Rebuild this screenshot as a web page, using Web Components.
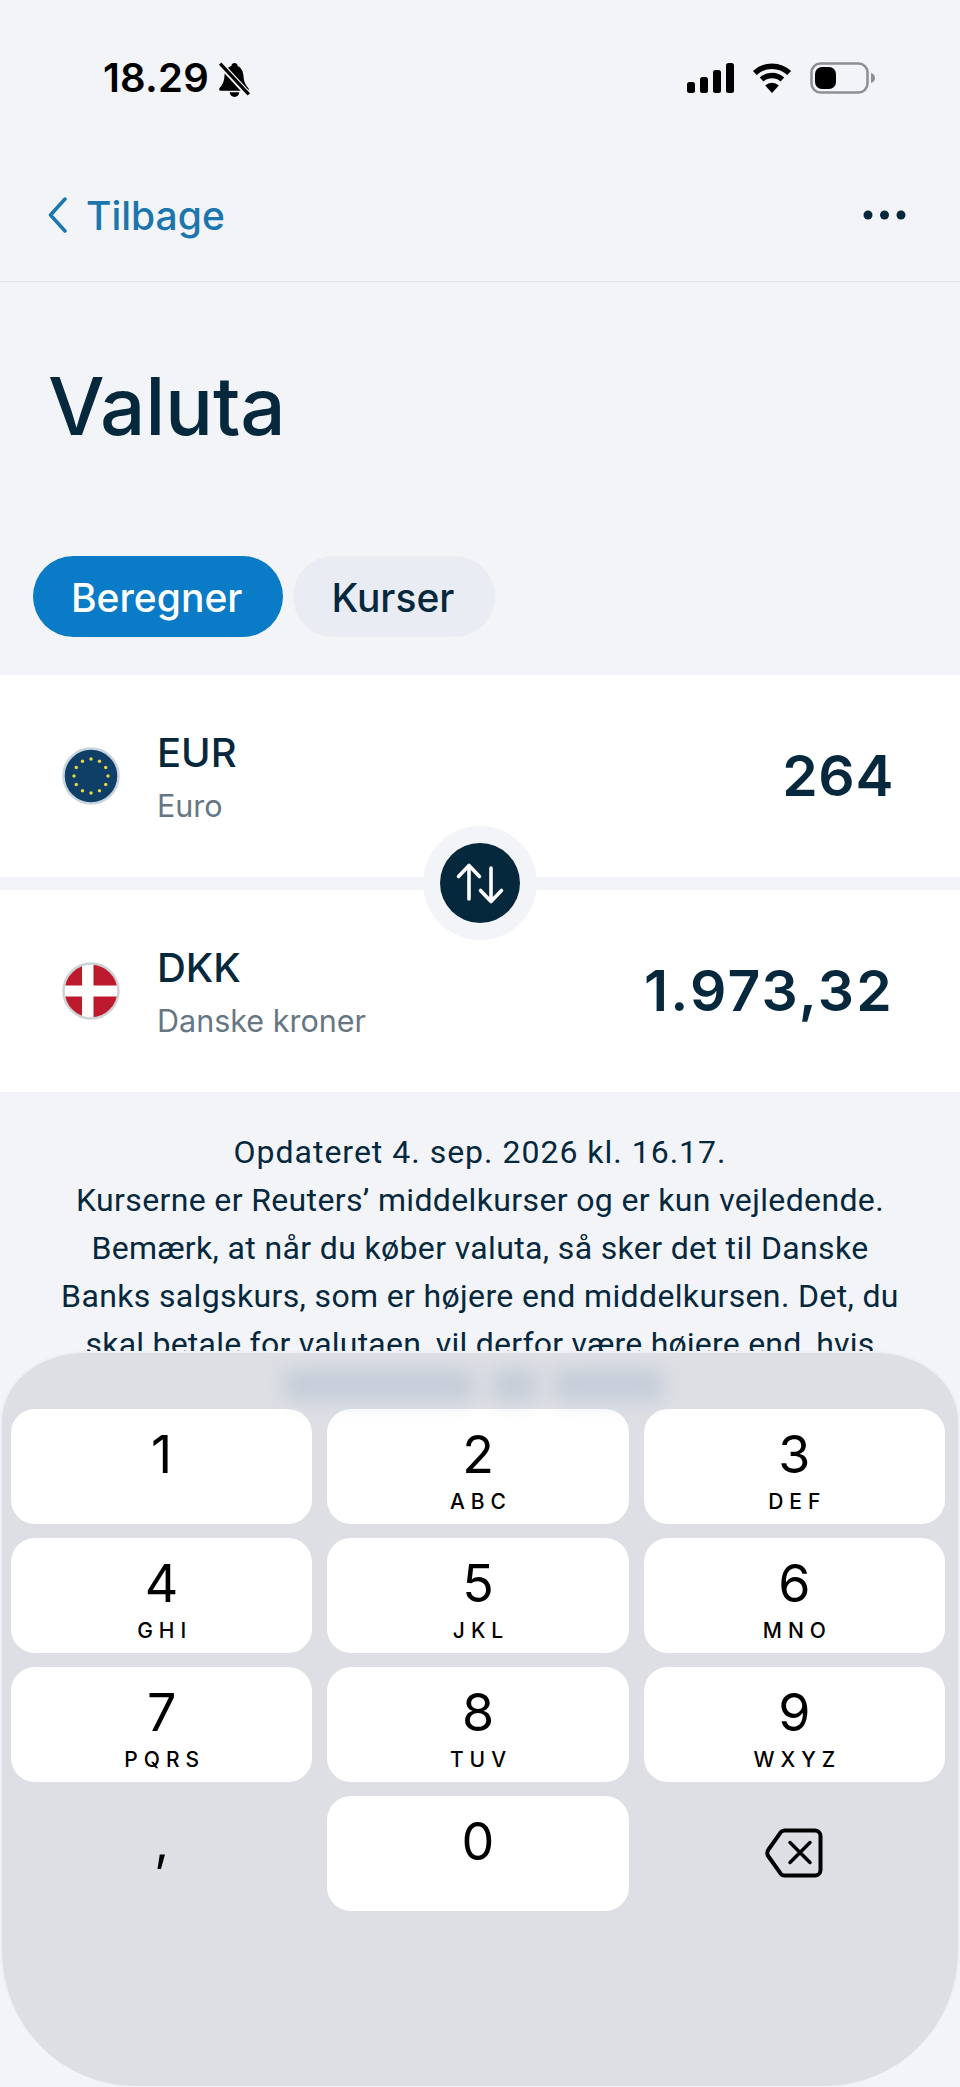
<!DOCTYPE html>
<html lang="da"><head><meta charset="utf-8"><title>Valuta</title>
<style>
html,body{margin:0;padding:0;background:#f2f4f8}
body{font-family:Inter,"Liberation Sans",sans-serif;color:#06283d}
</style></head><body>
<bank-app>
  <status-bar time="18.29"></status-bar>
  <nav-bar>Tilbage</nav-bar>
  <page-title>Valuta</page-title>
  <seg-tabs><seg-tab active>Beregner</seg-tab><seg-tab>Kurser</seg-tab></seg-tabs>
  <currency-panel>
    <currency-row code="EUR" name="Euro" amount="264" flag="eu" track=".6"></currency-row>
    <currency-row code="DKK" name="Danske kroner" amount="1.973,32" flag="dk" track="2.2"></currency-row>
    <swap-button></swap-button>
  </currency-panel>
  <info-text>
    <span style="letter-spacing:1px">Opdateret 4. sep. 2026 kl. 16.17.</span>
    <span>Kurserne er Reuters’ middelkurser og er kun vejledende.</span>
    <span>Bemærk, at når du køber valuta, så sker det til Danske</span>
    <span>Banks salgskurs, som er højere end middelkursen. Det, du</span>
    <span style="letter-spacing:.23px">skal betale for valutaen, vil derfor være højere end, hvis</span>
  </info-text>
  <num-keyboard>
    <key-cap>1</key-cap><key-cap letters="ABC">2</key-cap><key-cap letters="DEF">3</key-cap>
    <key-cap letters="GHI">4</key-cap><key-cap letters="JKL">5</key-cap><key-cap letters="MNO">6</key-cap>
    <key-cap letters="PQRS">7</key-cap><key-cap letters="TUV">8</key-cap><key-cap letters="WXYZ">9</key-cap>
    <key-cap plain>,</key-cap><key-cap>0</key-cap><key-cap plain icon></key-cap>
  </num-keyboard>
</bank-app>
<script>
function def(name, css, html, init){
  customElements.define(name, class extends HTMLElement{
    constructor(){super();const r=this.attachShadow({mode:'open'});
      r.innerHTML='<style>'+css+'</style>'+(typeof html==='function'?html(this):html);}
    connectedCallback(){ if(init) init(this); }
  });
}
def('bank-app',`:host{display:flex;flex-direction:column;position:relative;width:960px;height:2087px;overflow:hidden;background:#f2f4f8}`,`<slot></slot>`);

def('status-bar',`:host{display:flex;align-items:flex-start;height:150px;padding:62px 84px 0 103px;box-sizing:border-box}
 .t{font:600 40px/33px Inter,sans-serif;color:#000;letter-spacing:.2px;margin-top:-1px}
 .bell{margin-left:9px;display:block}
 .r{margin-left:auto;display:flex;align-items:flex-start;gap:18px}
 svg{display:block}`,
 `<span class="t"></span>
 <svg class="bell" width="33" height="35" viewBox="0 0 31 33"><path d="M15.500 1c-1.700 0-2.800 1.200-3 2.800C8 5.200 6.300 9 6 13.500c-.3 4.500-1.300 7.500-4.500 11-1 1.100-.5 2.500 1 2.500h25c1.500 0 2-1.400 1-2.500-3.200-3.500-4.200-6.500-4.500-11C23.700 9 22 5.200 18.500 3.800c-.2-1.600-1.300-2.800-3-2.800z" fill="#000"/><path d="M11 28.500h9a4.500 4.500 0 0 1-9 0z" fill="#000"/><path d="M3 3l25 27" stroke="#f2f4f8" stroke-width="6" fill="none"/><path d="M2 1.500l27 29" stroke="#000" stroke-width="3" fill="none"/></svg>
 <span class="r">
  <svg width="47" height="30" viewBox="0 0 47 30" style="margin-top:1px"><rect x="0" y="19" width="8" height="11" rx="2.500"/><rect x="13" y="14" width="8" height="16" rx="2.500"/><rect x="26" y="7" width="8" height="23" rx="2.500"/><rect x="39" y="0" width="8" height="30" rx="2.500"/></svg>
  <svg width="40" height="30" viewBox="0 0 40 30" style="margin-top:1px"><path d="M2.800 10A25 25 0 0 1 37.200 10" fill="none" stroke="#000" stroke-width="5.500"/><path d="M9.600 16.500A15.500 15.500 0 0 1 30.400 16.500" fill="none" stroke="#000" stroke-width="5.500"/><path d="M13.200 22.500A10 10 0 0 1 26.800 22.500L20 30z"/></svg>
  <svg width="66" height="32" viewBox="0 0 66 32"><rect x="1.500" y="1.500" width="56" height="29" rx="9" fill="none" stroke="#8e8e93" stroke-width="2.500"/><rect x="5" y="5" width="21" height="22" rx="7"/><path d="M61 11c2.500.6 4 2.500 4 5s-1.500 4.400-4 5z" fill="#8e8e93"/></svg>
 </span>`,
 el=>{el.shadowRoot.querySelector('.t').textContent=el.getAttribute('time')});

def('nav-bar',`:host{display:flex;align-items:center;height:132px;box-sizing:border-box;border-bottom:1.500px solid #e3e5ea;padding:0 54px 0 48px;position:relative}
 .l{display:flex;align-items:center;gap:19px;color:#1b76ad;font:500 39px/44px Inter,sans-serif}
 .l svg{margin-top:-2px}
 .d{margin-left:auto;display:block;margin-top:-1px}
 svg{display:block}`,
 `<span class="l"><svg width="19" height="36" viewBox="0 0 19 36"><path d="M17 2L2.500 18 17 34" fill="none" stroke="#1b76ad" stroke-width="3.500" stroke-linecap="round" stroke-linejoin="round"/></svg><slot></slot></span>
 <svg class="d" width="43" height="10" viewBox="0 0 43 10" fill="#06283d"><circle cx="5" cy="5" r="4.500"/><circle cx="21.500" cy="5" r="4.500"/><circle cx="38" cy="5" r="4.500"/></svg>`);

def('page-title',`:host{display:block;padding:79px 0 0 48px;height:274px;box-sizing:border-box;font:500 80px/90px Inter,sans-serif;color:#06283d;letter-spacing:-.3px}`,`<slot></slot>`);

def('seg-tabs',`:host{display:flex;gap:10px;padding-left:33px;height:119px;align-items:flex-start}`,`<slot></slot>`);
def('seg-tab',`:host{display:flex;align-items:center;height:81px;box-sizing:border-box;padding:2px 41px 0 38px;border-radius:41px;background:#e9ecf3;color:#06283d;font:500 39px/1 Inter,sans-serif}
 :host([active]){background:#0a7bc6;color:#fff}`,`<slot></slot>`);

def('currency-panel',`:host{display:flex;flex-direction:column;gap:13px;position:relative}`,`<slot></slot>`);
def('currency-row',`:host{display:flex;align-items:center;height:202px;background:#fff;padding:0 66px 0 62px;box-sizing:border-box}
 .f{display:block;flex:none;margin-right:37px}
 .c{font:500 40px/46px Inter,sans-serif;color:#06283d;margin-top:1px}
 .n{font:400 30.500px/36px Inter,sans-serif;color:#677683;margin-top:12px}
 .a{margin-left:auto;font:600 57px/64px Inter,sans-serif;color:#06283d}`,
 `<span class="f"></span><div><div class="c"></div><div class="n"></div></div><div class="a"></div>`,
 el=>{
  const s=el.shadowRoot,g=el.getAttribute.bind(el);
  s.querySelector('.c').textContent=g('code');s.querySelector('.n').textContent=g('name');
  const a=s.querySelector('.a');a.textContent=g('amount');a.style.letterSpacing=g('track')+'px';
  let inner='';
  if(g('flag')==='eu'){
    let st='';for(let i=0;i<12;i++){const t=i*Math.PI/6;st+=`<circle cx="${(29+17*Math.sin(t)).toFixed(2)}" cy="${(29-17*Math.cos(t)).toFixed(2)}" r="1.700" fill="#e6d84a"/>`}
    inner=`<circle cx="29" cy="29" r="27.500" fill="#0f3f66" stroke="#c8d5de" stroke-width="2.500"/>${st}`;
  }else{
    inner=`<clipPath id="k"><circle cx="29" cy="29" r="27.500"/></clipPath><g clip-path="url(#k)"><rect width="58" height="58" fill="#bd1a2e"/><rect x="20" width="11.500" height="58" fill="#fff"/><rect y="23.500" width="58" height="11" fill="#fff"/></g><circle cx="29" cy="29" r="27.500" fill="none" stroke="#cfd2d6" stroke-width="2.500"/>`;
  }
  s.querySelector('.f').innerHTML=`<svg width="58" height="58" viewBox="0 0 58 58" style="display:block">${inner}</svg>`;
 });

def('swap-button',`:host{position:absolute;left:423px;top:151px;width:114px;height:114px;border-radius:50%;background:#f2f4f8;display:flex;align-items:center;justify-content:center}
 .i{width:80px;height:80px;border-radius:50%;background:#06283d;display:flex;align-items:center;justify-content:center}`,
 `<div class="i"><svg width="80" height="80" viewBox="0 0 80 80" style="display:block" fill="none" stroke="#fff" stroke-width="3.600" stroke-linecap="round" stroke-linejoin="round"><path d="M29 56V23M18.500 33.500L29 22.500l10.500 11"/><path d="M51 25v33M40.500 47.500L51 58.500l10.500-11"/></svg></div>`);

def('info-text',`:host{display:flex;flex-direction:column;align-items:center;padding-top:36px;font:400 32px/48px Roboto,sans-serif;letter-spacing:.36px;color:#06283d;text-align:center}
 ::slotted(span){display:block;white-space:nowrap}`,`<slot></slot>`);

def('num-keyboard',`:host{position:absolute;left:0;right:0;bottom:1px;height:735px;box-sizing:border-box;background:#dddfe4;border:2px solid #eef0f5;border-bottom:0;border-radius:84px 84px 135px 135px / 70px 70px 135px 135px;padding:56px 13px 0 9px;display:grid;grid-template-columns:repeat(3,1fr);grid-auto-rows:114.500px;column-gap:15px;row-gap:14.500px;align-content:start}
 .b{position:absolute;top:16px;height:32px;background:#c6cdd9;filter:blur(9px);border-radius:8px}`,
 `<div class="b" style="left:282px;width:190px"></div><div class="b" style="left:490px;width:45px"></div><div class="b" style="left:552px;width:110px"></div><slot></slot>`);

def('key-cap',`:host{display:flex;flex-direction:column;align-items:center;background:#fff;border-radius:24px;color:#000;box-sizing:border-box;padding-top:20px;font-family:Inter,sans-serif}
 :host([plain]){background:transparent}
 .d{font:400 52px/52px Inter,sans-serif}
 .l{font:500 21px/22px Inter,sans-serif;letter-spacing:6px;margin:10px -6px 0 0}
 :host([icon]){padding-top:0;justify-content:center}`,
 el=>{
  if(el.hasAttribute('icon')) return `<svg width="58" height="50" viewBox="0 0 58 50" style="display:block" fill="none" stroke="#000" stroke-linecap="round" stroke-linejoin="round"><path d="M19.500 2.500H50a5.500 5.500 0 0 1 5.500 5.500v34a5.500 5.500 0 0 1-5.500 5.500H19.500a5 5 0 0 1-3.800-1.800L3.500 28.500a5.500 5.500 0 0 1 0-7L15.700 4.300a5 5 0 0 1 3.800-1.800z" stroke-width="4"/><path d="M25 14.500l20 20M45 14.500l-20 20" stroke-width="3.500"/></svg>`;
  const l=el.getAttribute('letters');
  return `<div class="d"><slot></slot></div>`+(l?`<div class="l">${l}</div>`:'');
 });
</script>
</body></html>
